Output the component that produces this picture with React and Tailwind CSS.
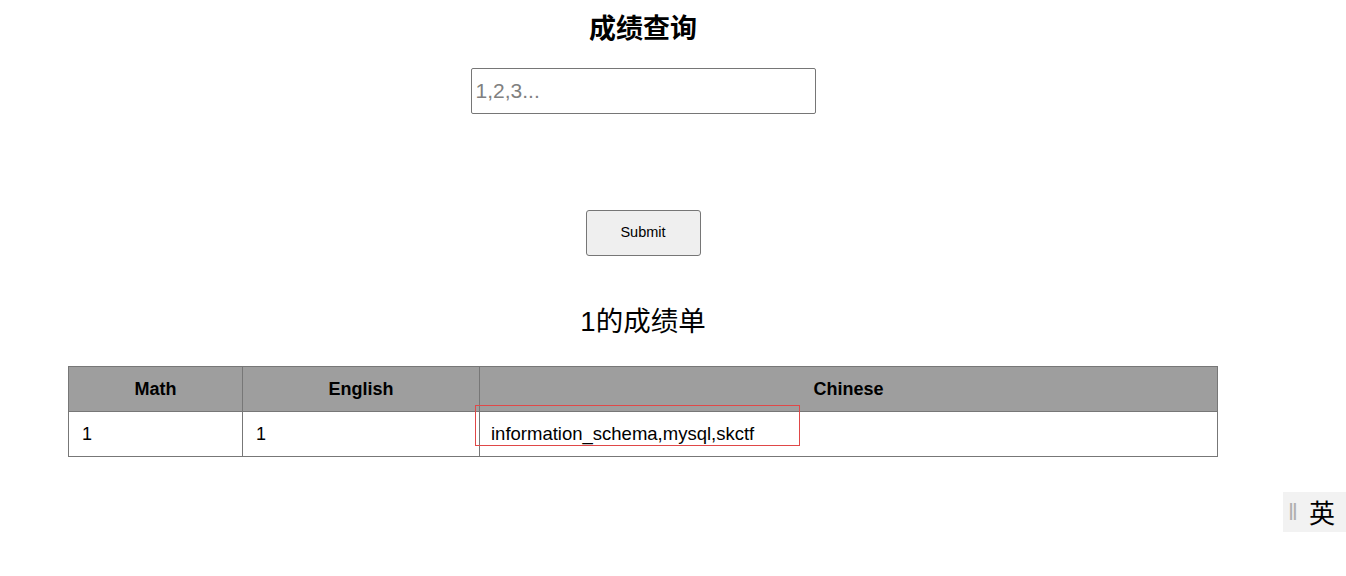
import React from 'react';

function App() {
  const font = { fontFamily: '"Liberation Sans", Arial, "Noto Sans CJK SC", sans-serif' };
  return (
    <div className="relative w-[1346px] h-[576px] bg-white text-black overflow-hidden" style={font}>
      <div className="w-[1286px] flex flex-col items-center">
        <h2 className="mt-[13px] text-[27px] leading-[33px] font-bold">成绩查询</h2>
        <input
          className="mt-[22px] w-[345px] h-[46px] border border-[#767676] rounded-[2px] px-[4px] text-[21px] placeholder:text-[#808080] outline-none"
          placeholder="1,2,3..."
        />
        <button className="mt-[96px] w-[115px] h-[46px] bg-[#efefef] border border-[#767676] rounded-[3px] text-[14.5px]">
          Submit
        </button>
        <h3 className="mt-[48px] text-[27.5px] leading-[35px]">1的成绩单</h3>
        <div className="relative mt-[27px]">
          <table className="w-[1150px] border-collapse border border-[#777]">
            <thead>
              <tr className="bg-[#9e9e9e] h-[45px]">
                <th className="w-[174px] border border-[#777] text-[18px] font-bold">Math</th>
                <th className="w-[237px] border border-[#777] text-[18px] font-bold">English</th>
                <th className="border border-[#777] text-[18px] font-bold">Chinese</th>
              </tr>
            </thead>
            <tbody>
              <tr className="h-[45px]">
                <td className="border border-[#777] pl-[13px] text-[18px]">1</td>
                <td className="border border-[#777] pl-[13px] text-[18px]">1</td>
                <td className="border border-[#777] pl-[11px] text-[18.5px]">information_schema,mysql,skctf</td>
              </tr>
            </tbody>
          </table>
          <div className="absolute left-[407px] top-[39px] w-[325px] h-[41px] border border-[#e04848]" />
        </div>
      </div>
      <div className="absolute right-0 top-[492px] w-[63px] h-[40px] bg-[#f2f2f2] flex items-center pl-[5px] gap-[11px]">
        <span className="text-[#b0b0b0] text-[24px] leading-none">‖</span>
        <span className="text-[26px] leading-none" style={{ fontFamily: '"Noto Sans CJK SC", sans-serif' }}>英</span>
      </div>
    </div>
  );
}

export default App;
